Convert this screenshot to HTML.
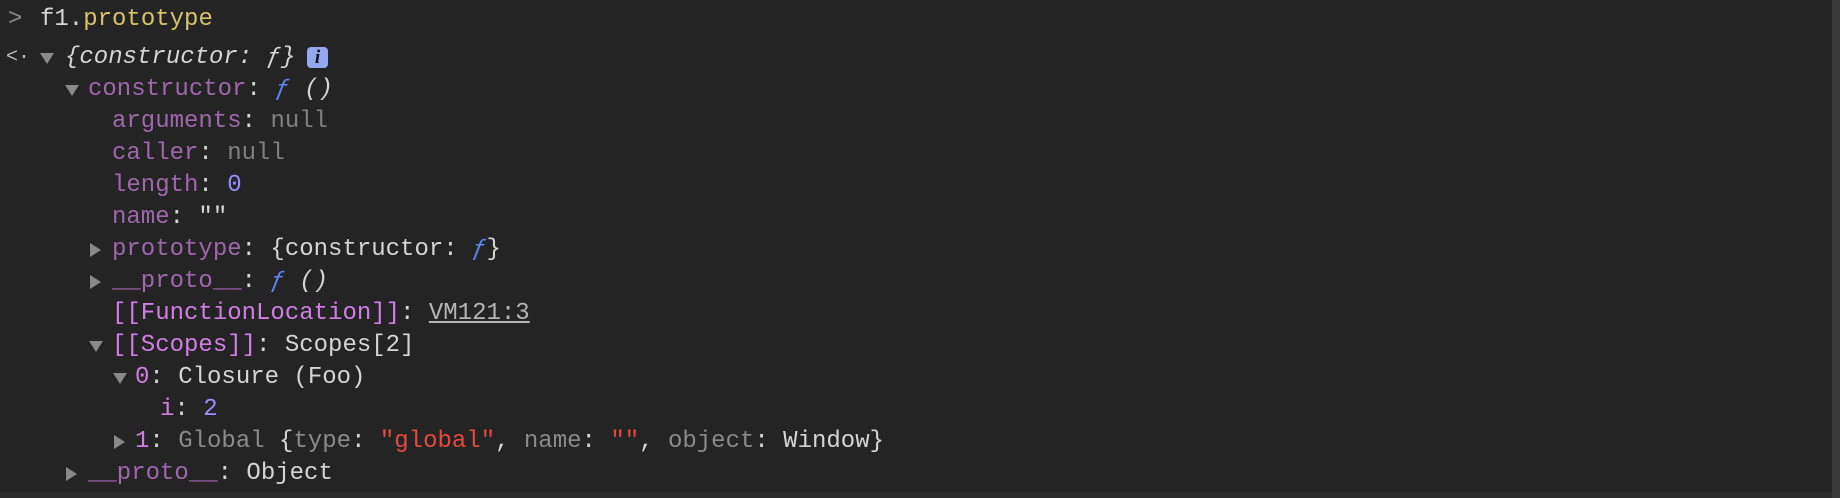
<!DOCTYPE html>
<html><head><meta charset="utf-8"><style>
html,body{margin:0;padding:0;background:#242424;width:1840px;height:498px;overflow:hidden;position:relative}
.l{position:absolute;left:0;height:32px;line-height:32px;font-family:"Liberation Mono",monospace;font-size:24px;color:#d5d5d5;white-space:pre}
.p{color:#a066ae}.ip{color:#d27ee6}.n{color:#808080}.num{color:#9b8cff}.s{color:#e5493f}.f{color:#5d84f2;font-style:italic}.y{color:#d8c26c}.g{color:#8a8a8a}.it{font-style:italic}
.tri{position:absolute;width:0;height:0}
.down{border-left:7px solid transparent;border-right:7px solid transparent;border-top:11px solid #8a8a8a;top:11px}
.right{border-top:7px solid transparent;border-bottom:7px solid transparent;border-left:11px solid #8a8a8a;top:9px}
.u{text-decoration:underline;color:#b5b5b5}
</style></head><body>
<div class="l" style="top:4px;left:8px;color:#8a8a8a">&gt;</div>
<div class="l" style="top:4px;left:40px">f1.<span class="y">prototype</span></div>

<div class="l" style="top:42px;left:6px;color:#bbb;font-size:20px">&lt;·</div>
<div class="tri down" style="top:53px;left:40px"></div>
<div class="l" style="top:42px;left:65px"><span class="it">{constructor: ƒ}</span></div>
<div style="position:absolute;left:307px;top:47px;width:21px;height:21px;background:#94a8f0;border-radius:4px;color:#111;font:italic bold 19px 'Liberation Serif',serif;text-align:center;line-height:22px">i</div>

<div class="tri down" style="top:85px;left:65px"></div>
<div class="l" style="top:74px;left:88px"><span class="p">constructor</span>: <span class="f">ƒ</span> <span class="it">()</span></div>
<div class="l" style="top:106px;left:112px"><span class="p">arguments</span>: <span class="n">null</span></div>
<div class="l" style="top:138px;left:112px"><span class="p">caller</span>: <span class="n">null</span></div>
<div class="l" style="top:170px;left:112px"><span class="p">length</span>: <span class="num">0</span></div>
<div class="l" style="top:202px;left:112px"><span class="p">name</span>: ""</div>
<div class="tri right" style="top:243px;left:90px"></div>
<div class="l" style="top:234px;left:112px"><span class="p">prototype</span>: {constructor: <span class="f">ƒ</span>}</div>
<div class="tri right" style="top:275px;left:90px"></div>
<div class="l" style="top:266px;left:112px"><span class="p">__proto__</span>: <span class="f">ƒ</span> <span class="it">()</span></div>
<div class="l" style="top:298px;left:112px"><span class="ip">[[FunctionLocation]]</span>: <span class="u">VM121:3</span></div>
<div class="tri down" style="top:341px;left:89px"></div>
<div class="l" style="top:330px;left:112px"><span class="ip">[[Scopes]]</span>: Scopes[2]</div>
<div class="tri down" style="top:373px;left:113px"></div>
<div class="l" style="top:362px;left:135px"><span class="ip">0</span>: Closure (Foo)</div>
<div class="l" style="top:394px;left:160px"><span class="ip">i</span>: <span class="num">2</span></div>
<div class="tri right" style="top:435px;left:114px"></div>
<div class="l" style="top:426px;left:135px"><span class="ip">1</span>: <span class="g">Global</span> {<span class="g">type</span>: <span class="s">"global"</span>, <span class="g">name</span>: <span class="s">""</span>, <span class="g">object</span>: Window}</div>
<div class="tri right" style="top:467px;left:66px"></div>
<div class="l" style="top:458px;left:88px"><span class="p">__proto__</span>: Object</div>

<div style="position:absolute;left:0;top:492px;width:1832px;height:6px;background:#2b2b2b"></div>
<div style="position:absolute;left:1832px;top:0;width:8px;height:498px;background:#3a3a3a"></div>
</body></html>
